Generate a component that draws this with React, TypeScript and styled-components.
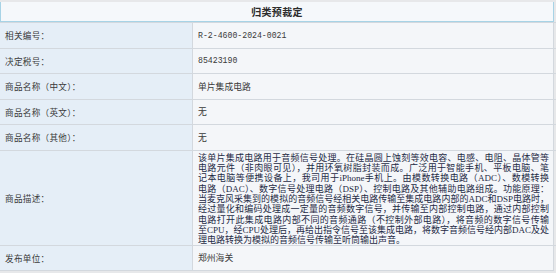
import styled, { createGlobalStyle } from "styled-components";

const GlobalStyle = createGlobalStyle`
  html, body {
    margin: 0;
    padding: 0;
    background: #e7e8ea;
  }
  body {
    font-family: "Noto Sans CJK SC", "Liberation Sans", sans-serif;
  }
`;

const Panel = styled.div`
  width: 554px;
  padding-top: 2px;
  padding-bottom: 3px;
`;

const Caption = styled.div`
  height: 19px;
  background: #f5f8fb;
  border: 1px solid #a7d3e6;
  border-top: none;
  display: flex;
  align-items: center;
  justify-content: center;
  font-size: 10px;
  font-weight: 700;
  color: #2b2b2b;
  letter-spacing: 0.3px;
`;

const Table = styled.div`
  display: grid;
  grid-template-columns: 193px 1fr;
  border-right: 1px solid #d3d8de;
  border-bottom: 1px solid #d3d8de;
  background: #f4f6f9;
`;

const Label = styled.div<{ $tall?: boolean }>`
  height: ${(p) => (p.$tall ? "94px" : "24.5px")};
  border-top: 1px solid #d3d8de;
  border-right: 1px solid #d3d8de;
  background: #e5eef7;
  display: flex;
  align-items: center;
  padding-left: 5px;
  font-size: 8.6px;
  letter-spacing: 0.3px;
  color: #3a3a3a;
`;

const Value = styled.div<{ $mono?: boolean }>`
  height: 24.5px;
  border-top: 1px solid #d3d8de;
  display: flex;
  align-items: center;
  padding-left: 5px;
  font-family: ${(p) =>
    p.$mono
      ? `"Liberation Mono", "Noto Sans CJK SC", monospace`
      : `"Noto Sans CJK SC", sans-serif`};
  font-size: ${(p) => (p.$mono ? "8.2px" : "8.8px")};
  color: #3a3a3a;
`;

const Description = styled.div`
  height: 94px;
  border-top: 1px solid #d3d8de;
  padding: 2px 7px 0 5px;
  box-sizing: border-box;
  font-family: "Liberation Serif", "Noto Sans CJK SC", serif;
  font-size: 9px;
  line-height: 10.35px;
  color: #1f2b45;
`;

const Line = styled.div<{ $last?: boolean }>`
  white-space: nowrap;
  text-align: ${(p) => (p.$last ? "left" : "justify")};
  text-align-last: ${(p) => (p.$last ? "left" : "justify")};
`;

const descLines = [
  "该单片集成电路用于音频信号处理。在硅晶圆上蚀刻等效电容、电感、电阻、晶体管等",
  "电路元件（非肉眼可见），并用环氧树脂封装而成。广泛用于智能手机、平板电脑、笔",
  "记本电脑等便携设备上，我司用于iPhone手机上。由模数转换电路（ADC）、数模转换",
  "电路（DAC）、数字信号处理电路（DSP）、控制电路及其他辅助电路组成。功能原理：",
  "当麦克风采集到的模拟的音频信号经相关电路传输至集成电路内部的ADC和DSP电路时，",
  "经过量化和编码处理成一定量的音频数字信号，并传输至内部控制电路，通过内部控制",
  "电路打开此集成电路内部不同的音频通路（不控制外部电路），将音频的数字信号传输",
  "至CPU，经CPU处理后，再给出指令信号至该集成电路，将数字音频信号经内部DAC及处",
  "理电路转换为模拟的音频信号传输至听筒输出声音。",
];

export default function App() {
  return (
    <>
      <GlobalStyle />
      <Panel>
        <Caption>归类预裁定</Caption>
        <Table>
          <Label>相关编号：</Label>
          <Value $mono>R-2-4600-2024-0021</Value>

          <Label>决定税号：</Label>
          <Value $mono>85423190</Value>

          <Label>商品名称（中文）：</Label>
          <Value>单片集成电路</Value>

          <Label>商品名称（英文）：</Label>
          <Value>无</Value>

          <Label>商品名称（其他）：</Label>
          <Value>无</Value>

          <Label $tall>商品描述：</Label>
          <Description>
            {descLines.map((line, i) => (
              <Line key={i} $last={i === descLines.length - 1}>
                {line}
              </Line>
            ))}
          </Description>

          <Label>发布单位：</Label>
          <Value>郑州海关</Value>
        </Table>
      </Panel>
    </>
  );
}
